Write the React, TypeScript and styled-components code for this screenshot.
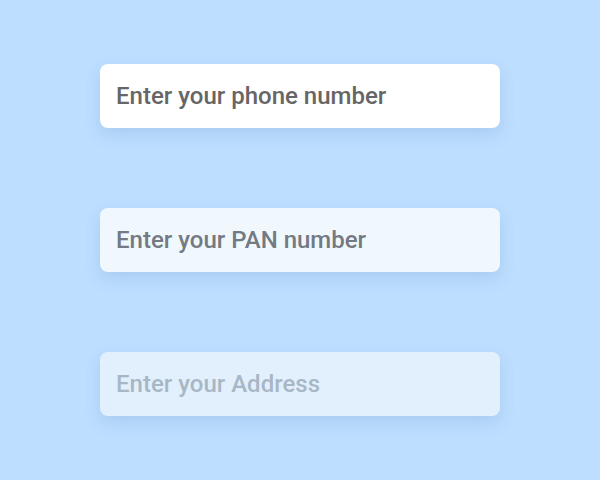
import React from "react";
import styled, { createGlobalStyle } from "styled-components";

const Global = createGlobalStyle`
  html, body { margin: 0; padding: 0; background: #bddefe; }
  * { box-sizing: border-box; }
`;

const Page = styled.div`
  width: 600px;
  height: 480px;
  background: #bddefe;
  display: flex;
  flex-direction: column;
  align-items: center;
  padding-top: 64px;
  gap: 80px;
  font-family: Roboto, "Liberation Sans", sans-serif;
`;

type Variant = "white" | "light" | "faint";

const bg: Record<Variant, string> = {
  white: "#ffffff",
  light: "#f0f8fe",
  faint: "#e2f0fd",
};
const fg: Record<Variant, string> = {
  white: "#666666",
  light: "#747a83",
  faint: "#a8b7c5",
};

const Field = styled.input<{ $variant: Variant }>`
  width: 400px;
  height: 64px;
  border: none;
  outline: none;
  border-radius: 8px;
  padding: 0 16px;
  font-family: Roboto, "Liberation Sans", sans-serif;
  font-size: 24px;
  font-weight: 500;
  background: ${(p) => bg[p.$variant]};
  color: ${(p) => fg[p.$variant]};
  box-shadow: 0 6px 16px rgba(80, 130, 190, 0.2);
  &::placeholder {
    color: ${(p) => fg[p.$variant]};
    opacity: 1;
  }
`;

export default function App() {
  return (
    <>
      <Global />
      <Page>
        <Field $variant="white" placeholder="Enter your phone number" />
        <Field $variant="light" placeholder="Enter your PAN number" />
        <Field $variant="faint" placeholder="Enter your Address" />
      </Page>
    </>
  );
}
